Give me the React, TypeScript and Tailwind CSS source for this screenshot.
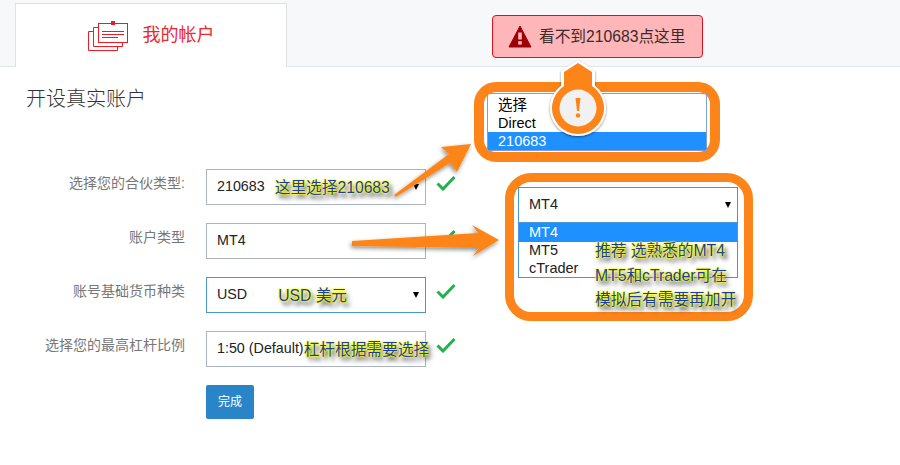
const sans = "font-['Liberation_Sans','Noto_Sans_CJK_SC',sans-serif]";
const note = "mt-[2px] whitespace-nowrap text-[15.7px] leading-[18px] text-[#1d3f9c] font-['Liberation_Sans','Noto_Sans_CJK_SC',sans-serif] [text-shadow:0_0_1px_#ffff20,0_0_2px_#ffff20,0_0_2px_#ffff20,0_0_2px_#ffff20,3px_4px_4px_#333]";

function Check() {
  return (
    <svg width="20" height="16" viewBox="0 0 20 16" className="shrink-0">
      <path d="M1.5 8.5 L7 14 L18.5 2" fill="none" stroke="#22b14c" strokeWidth="3" />
    </svg>
  );
}

function Caret() {
  return <span className="h-0 w-0 border-x-[3.5px] border-t-[6px] border-x-transparent border-t-black" />;
}

function Row({ label, value, focused, caret, children }: { label: string; value: string; focused?: boolean; caret?: boolean; children?: React.ReactNode }) {
  return (
    <div className="flex h-9 items-start">
      <label className="w-[186px] pt-[5px] pr-[1px] text-right text-[14px] leading-[18px] text-[#777]">{label}</label>
      <div className={`ml-5 flex h-9 w-[220px] items-center border pl-[10px] pr-[6px] text-[14.3px] text-[#222] ${focused ? "border-[#4a96d2]" : "border-[#a9b3c1]"}`}>
        <span className="whitespace-nowrap">{value}</span>
        {children}
        {caret && <span className="ml-auto flex"><Caret /></span>}
      </div>
      <div className="ml-[10px] pt-[6px]"><Check /></div>
    </div>
  );
}

export default function App() {
  return (
    <div className={`relative h-[465px] w-[900px] overflow-hidden bg-white ${sans}`}>
      <div className="flex h-[67px] items-end border-b border-[#e3e6e9] bg-[#f7f8fa] pl-[15px]">
        <div className="-mb-px flex h-[64px] w-[272px] items-center justify-center gap-[15px] border-x border-t border-[#dfe2e5] bg-white">
          <svg width="40" height="30" viewBox="0 0 40 30" fill="none" stroke="#ed1c24" strokeWidth="1">
            <path d="M5 10.5H0.5V29.5H29.5V25" />
            <path d="M10 6.5H5.5V25.5H34.5V21" />
            <rect x="10.5" y="2.5" width="29" height="19" fill="#fff" />
            <path d="M14 10.5H36M14 13.5H36M14 16.5H30" />
            <rect x="23" y="0" width="4" height="4" fill="#ed1c24" stroke="none" />
          </svg>
          <span className="text-[18px] text-[#ed2630]">我的帐户</span>
        </div>
      </div>

      <main className="pl-[26px] pt-[19px]">
        <h1 className="text-[20px] font-light leading-[26px] text-[#333] font-['Liberation_Serif','Noto_Sans_CJK_SC',serif]">开设真实账户</h1>
        <form className="-ml-[26px] mt-[57px] flex flex-col gap-[18px]">
          <Row label="选择您的合伙类型:" value="210683" caret>
            <span className={`${note} ml-[10px]`}>这里选择210683</span>
          </Row>
          <Row label="账户类型" value="MT4" />
          <Row label="账号基础货币种类" value="USD" focused caret>
            <span className={`${note} ml-[31px]`}>USD 美元</span>
          </Row>
          <Row label="选择您的最高杠杆比例" value="1:50 (Default)">
            <span className={note}>杠杆根据需要选择</span>
          </Row>
          <div className="ml-[206px]">
            <button type="button" className="h-[34px] w-12 rounded-[2px] bg-[#2a85c8] text-[12px] text-white">完成</button>
          </div>
        </form>
      </main>

      {/* Alert */}
      <div className="absolute left-[492px] top-[15px] flex h-[43px] w-[211px] items-center gap-[7px] rounded-[4px] border border-[#d6141f] bg-[#ffb6b9] pl-[15px] text-[15.7px] text-[#3d2a2a]">
        <svg width="24" height="23" viewBox="0 0 24 23">
          <path d="M12 1 L23 22 H1 Z" fill="#9c0006" stroke="#9c0006" strokeLinejoin="round" />
          <rect x="10.2" y="7.5" width="3.6" height="7" fill="#ffb6b9" />
          <rect x="10.2" y="16.2" width="3.6" height="3.4" fill="#ffb6b9" />
        </svg>
        <span>看不到210683点这里</span>
      </div>

      {/* Upper list callout */}
      <div className="absolute left-[474px] top-[82px] h-[80px] w-[246px] rounded-[22px] border-[10px] border-[#fd8419] bg-white px-[3px] pt-px">
        <ul className="border border-[#7f9fd6] text-[14.5px] leading-[18px] text-black">
          <li className="pl-[10px] pt-[2px]">选择</li>
          <li className="pl-[10px]">Direct</li>
          <li className="bg-[#1e90ff] pl-[10px] text-white">210683</li>
        </ul>
      </div>

      {/* Pin */}
      <svg width="64" height="80" viewBox="0 0 64 80" className="absolute left-[546px] top-[59px]">
        <defs>
          <filter id="p" x="-20%" y="-20%" width="140%" height="140%">
            <feDropShadow dx="0" dy="1" stdDeviation="1.2" floodColor="#000" floodOpacity="0.5" />
          </filter>
        </defs>
        <path d="M32 1 L49 12 V26.8 A28 28 0 1 1 15 26.8 V12 Z" fill="#fff" filter="url(#p)" />
        <path d="M32 4 L46 13 V27.1 A26 26 0 1 1 18 27.1 V13 Z" fill="#fd8419" />
        <circle cx="32" cy="49" r="18.5" fill="#f1f1f1" />
        <path d="M29.5 39 H34.5 L33 52 H31 Z" fill="#fd8419" />
        <circle cx="32" cy="56.5" r="2.2" fill="#fd8419" />
      </svg>

      {/* Lower list callout */}
      <div className="absolute left-[505px] top-[173px] h-[148px] w-[248px] rounded-[26px] border-[9px] border-[#fd8419] bg-white pl-[4px] pt-[5px]">
        <div className="h-[91px] w-[220px] overflow-hidden border border-[#4a96d2] text-[14.5px] text-[#222]">
          <div className="flex h-[35px] items-center justify-between border-b border-[#4a96d2] pl-[10px] pr-[6px]">MT4<Caret /></div>
          <div className="bg-[#1e90ff] pl-[10px] leading-[19px] text-white">MT4</div>
          <div className="pl-[10px] leading-[17px]">MT5</div>
          <div className="pl-[10px] leading-[18px]">cTrader</div>
        </div>
        <div className="absolute left-[81px] top-[58px] flex flex-col gap-[4.5px]">
          <span className={note}>推荐 选熟悉的MT4</span>
          <span className={note}>MT5和cTrader可在</span>
          <span className={note}>模拟后有需要再加开</span>
        </div>
      </div>

      {/* Arrows */}
      <svg width="900" height="465" viewBox="0 0 900 465" className="pointer-events-none absolute left-0 top-0">
        <defs>
          <filter id="s" x="-20%" y="-30%" width="140%" height="160%">
            <feDropShadow dx="-1" dy="2" stdDeviation="2" floodColor="#000" floodOpacity="0.45" />
          </filter>
        </defs>
        <path d="M394 195 L449 154 L441 147 L471 144 L457 172 L450 163 L396 197 Z" fill="#fd8419" filter="url(#s)" />
        <path d="M352 241 L478 233 L472 225 L499 240 L473 256 L479 248 L352 246 Z" fill="#fd8419" filter="url(#s)" />
      </svg>
    </div>
  );
}
